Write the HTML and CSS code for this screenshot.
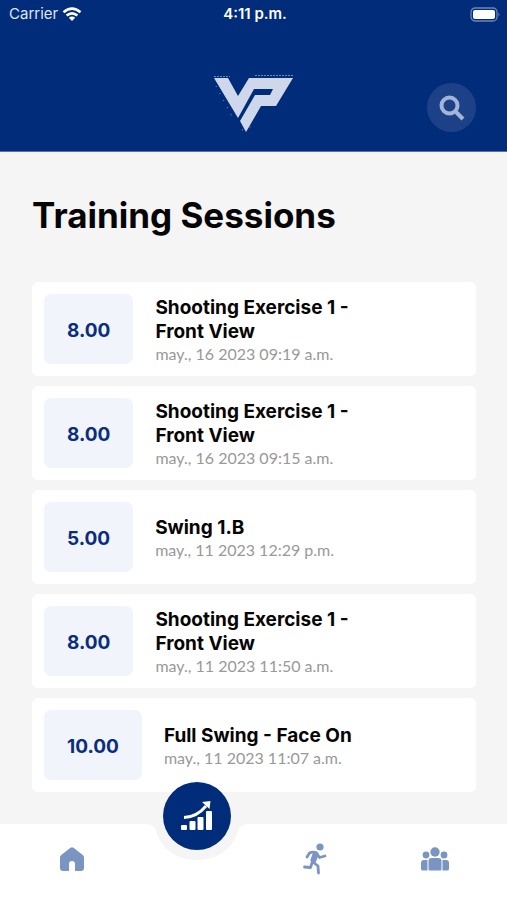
FILE: index.html
```html
<!DOCTYPE html>
<html lang="en">
<head>
<meta charset="utf-8">
<meta name="viewport" content="width=device-width, initial-scale=1">
<title>Training Sessions</title>
<link rel="stylesheet" href="styles.css">
</head>
<body>
<header class="header">
  <div class="status">
    <span class="carrier">Carrier
      <svg width="20" height="15" viewBox="0 0 20 15" fill="none" stroke="#fff" stroke-width="2.6" aria-hidden="true"><path d="M1.5 5.2Q10-2 18.500 5.200M4.600 8.600Q10 4.200 15.400 8.600"/><path d="M6.800 10.800Q10 8 13.200 10.800L10 14Z" fill="#fff" stroke="none"/></svg>
    </span>
    <span class="clock">4:11 p.m.</span>
    <span class="battery">
      <svg width="31" height="15" viewBox="0 0 31 15" aria-hidden="true"><rect x="1" y="1" width="26" height="13" rx="4" fill="none" stroke="#6c86b9" stroke-width="1.300"/><rect x="3" y="3" width="22" height="9" rx="2" fill="#fff"/><path d="M28.500 5.500Q30.500 7.500 28.500 9.500Z" fill="#6c86b9"/></svg>
    </span>
  </div>
  <div class="brand-row">
    <svg class="logo" width="82" height="60" viewBox="0 0 82 60" role="img" aria-label="VP">
      <path fill="#cfd8ea" d="M1 6H15L25 24L36 6H80L63 34H48L33 60L27 49L42 23H57L60 17H41L25 46Z"/>
      <path fill="none" stroke="#6d86bb" stroke-dasharray="2 1" d="M1 4.500H17M42 3.500H80"/>
      <path fill="none" stroke="#8fa3cc" stroke-dasharray="1 7" d="M3 14L21 48M29 58L42 53"/>
    </svg>
    <button class="search" type="button" aria-label="Search">
      <svg width="26" height="26" viewBox="0 0 26 26" fill="none" stroke="#a3b4d6" stroke-width="4" aria-hidden="true"><circle cx="10.500" cy="10.500" r="8"/><path d="M16.500 16.500L24 24"/></svg>
    </button>
  </div>
</header>
<main class="content">
  <h1>Training Sessions</h1>
  <ul class="sessions">
    <li class="card"><span class="score">8.00</span><div class="info"><h2>Shooting Exercise 1 - Front View</h2><p>may., 16 2023 09:19 a.m.</p></div></li>
    <li class="card"><span class="score">8.00</span><div class="info"><h2>Shooting Exercise 1 - Front View</h2><p>may., 16 2023 09:15 a.m.</p></div></li>
    <li class="card"><span class="score">5.00</span><div class="info"><h2>Swing 1.B</h2><p>may., 11 2023 12:29 p.m.</p></div></li>
    <li class="card"><span class="score">8.00</span><div class="info"><h2>Shooting Exercise 1 - Front View</h2><p>may., 11 2023 11:50 a.m.</p></div></li>
    <li class="card"><span class="score">10.00</span><div class="info"><h2>Full Swing - Face On</h2><p>may., 11 2023 11:07 a.m.</p></div></li>
  </ul>
</main>
<nav class="tabs" aria-label="Main">
  <a class="tab" href="#home" aria-label="Home">
    <svg width="24" height="24" viewBox="0 0 24 24" fill="#7b95c2" aria-hidden="true"><path d="M10.500 .8Q12-.3 13.500 .8L22.800 8Q24 9 24 10.500V21Q24 24 21 24H15V17Q15 14 12 14T9 17V24H3Q0 24 0 21V10.500Q0 9 1.200 8Z"/></svg>
  </a>
  <div class="tab current">
    <svg class="notch" width="110" height="40" viewBox="0 0 110 40" aria-hidden="true"><path fill="#f5f5f5" d="M2 0Q10 0 13 4C18 22 31 36 55 36S92 22 97 4Q100 0 108 0Z"/></svg>
    <a class="fab" href="#sessions" aria-label="Training sessions" aria-current="page">
      <svg width="32" height="30" viewBox="0 0 32 30" fill="#fff" aria-hidden="true"><rect x="0" y="24" width="6" height="5" rx="1"/><rect x="8.500" y="20" width="6" height="9" rx="1"/><rect x="16.500" y="16" width="6" height="13" rx="1"/><rect x="25" y="10" width="6" height="19" rx="1"/><path d="M3 16.500Q16 16 25 5" fill="none" stroke="#fff" stroke-width="2.800"/><path d="M21 1L29.500 0L28.500 8Z"/></svg>
    </a>
  </div>
  <a class="tab" href="#activity" aria-label="Activity">
    <svg width="24" height="32" viewBox="0 0 24 32" fill="none" stroke="#7b95c2" stroke-width="2.800" stroke-linecap="round" stroke-linejoin="round" aria-hidden="true"><circle cx="17" cy="4" r="3.600" fill="#7b95c2" stroke="none"/><path d="M4 14L6.500 10Q9 8.500 13 9.500L16.500 14.500L22 13"/><path d="M12.500 11.500L10.500 17" stroke-width="6"/><path d="M10 19L15 23L15.500 30M9 20L7.500 24.500L1.500 24"/></svg>
  </a>
  <a class="tab" href="#team" aria-label="Team">
    <svg width="28" height="24" viewBox="0 0 28 24" fill="#7b95c2" aria-hidden="true"><circle cx="14" cy="5" r="4.700"/><circle cx="5" cy="8" r="3.400"/><circle cx="23" cy="8" r="3.400"/><path d="M7.500 14Q7.500 11 10.500 11H17.500Q20.500 11 20.500 14V22Q20.500 23.500 19 23.500H9Q7.500 23.500 7.500 22ZM3 13H6.500V23.500H2Q0 23.500 0 22V16Q0 13 3 13ZM21.500 13H25Q28 13 28 16V22Q28 23.500 26 23.500H21.500Z"/></svg>
  </a>
</nav>
</body>
</html>
```
FILE: styles.css
```css
* { box-sizing: border-box; }

body {
  margin: 0;
  min-height: 100vh;
  display: flex;
  flex-direction: column;
  background: #f5f5f5;
  color: #050505;
  font-family: Inter, sans-serif;
}

h1, h2, p, ul { margin: 0; padding: 0; }

.header {
  background: #002c7a;
  border-bottom: 1px solid #5471a8;
  color: #fff;
  padding-bottom: 19px;
}

.status {
  display: grid;
  grid-template-columns: 1fr auto 1fr;
  align-items: center;
  height: 28px;
  padding: 0 6px 0 9px;
  font-size: 15px;
  line-height: 20px;
}

.carrier {
  display: flex;
  align-items: center;
  gap: 4px;
  color: #dfe6f2;
}

.clock { font-weight: 600; }

.battery { display: flex; justify-content: flex-end; }

.brand-row {
  display: grid;
  grid-template-columns: 1fr auto 1fr;
  align-items: end;
  margin-top: 44px;
  padding: 0 31px 0 32px;
}

.logo { grid-column: 2; }

.search {
  grid-column: 3;
  justify-self: end;
  display: grid;
  place-items: center;
  width: 49px;
  height: 49px;
  padding: 0;
  border: 0;
  border-radius: 50%;
  background: #1d4189;
}

.content {
  flex: 1;
  padding: 40px 31px 30px 32px;
}

h1 {
  font-size: 35px;
  line-height: 46px;
  font-weight: 700;
}

.sessions {
  display: flex;
  flex-direction: column;
  gap: 10px;
  margin-top: 44px;
  list-style: none;
}

.card {
  display: flex;
  align-items: center;
  gap: 22px;
  min-height: 94px;
  padding: 12px;
  border-radius: 6px;
  background: #fff;
}

.score {
  display: grid;
  place-items: center;
  height: 70px;
  padding: 2px 23px 0;
  border-radius: 7px;
  background: #f2f4fc;
  color: #0a2d80;
  font-size: 19px;
  font-weight: 700;
}

.info {
  max-width: 220px;
  padding-top: 2px;
}

h2 {
  font-size: 19px;
  line-height: 24px;
  font-weight: 700;
}

.info p {
  color: #999;
  font-family: Lato, sans-serif;
  font-size: 16px;
  line-height: 20px;
}

.tabs {
  position: sticky;
  bottom: 0;
  display: grid;
  grid-template-columns: 124fr 126fr 110fr 130fr;
  height: 76px;
  padding: 0 7px 0 10px;
  background: #fff;
}

.tab {
  display: grid;
  place-items: center;
  height: 70px;
}

.current { position: relative; }

.notch {
  position: absolute;
  top: 0;
  left: calc(50% - 55px);
}

.fab {
  position: absolute;
  top: -42px;
  left: calc(50% - 34px);
  display: grid;
  place-items: center;
  width: 68px;
  height: 68px;
  border-radius: 50%;
  background: #002c7a;
}
```
